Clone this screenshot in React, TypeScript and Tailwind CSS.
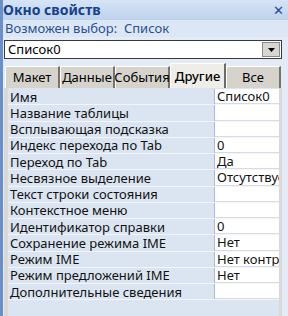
import { useState } from 'react';

const rows: [string, string][] = [
  ['Имя', 'Список0'],
  ['Название таблицы', ''],
  ['Всплывающая подсказка', ''],
  ['Индекс перехода по Tab', '0'],
  ['Переход по Tab', 'Да'],
  ['Несвязное выделение', 'Отсутствует'],
  ['Текст строки состояния', ''],
  ['Контекстное меню', ''],
  ['Идентификатор справки', '0'],
  ['Сохранение режима IME', 'Нет'],
  ['Режим IME', 'Нет контроля'],
  ['Режим предложений IME', 'Нет'],
  ['Дополнительные сведения', ''],
];

const tabs = ['Макет', 'Данные', 'События', 'Другие', 'Все'];

export default function App() {
  const [active, setActive] = useState('Другие');

  return (
    <div
      className="w-[288px] h-[316px] overflow-hidden flex flex-col bg-[#c4d6ee] border-l-[3px] border-[#6a8fc9] text-[13px] leading-none"
      style={{ fontFamily: '"Noto Sans", "DejaVu Sans", sans-serif' }}
    >
      {/* заголовок */}
      <div className="h-[20px] shrink-0 flex items-center justify-between pr-[4px] bg-gradient-to-b from-[#d6e4f5] to-[#bed2ed]">
        <span className="font-bold text-[#15428b] text-[14px]">Окно свойств</span>
        <span className="text-[#1c4aa0] font-bold text-[13px]">✕</span>
      </div>
      <div className="h-[17px] shrink-0 flex items-center bg-[#dce7f5] text-[#2a4f91] text-[13px] pl-[2px]">
        Возможен выбор:&nbsp; Список
      </div>

      <div className="flex-1 flex flex-col bg-[#e3ebf6] pr-[6px] pl-[1px]">
        {/* комбобокс */}
        <div className="mt-[3px] h-[19px] flex border border-[#3a3a3a] bg-white">
          <span className="flex-1 flex items-center pl-[3px] text-black">Список0</span>
          <div className="w-[18px] m-[1px] bg-[#d8d6d0] border border-[#8a8a8a] flex items-center justify-center">
            <svg width="7" height="4" viewBox="0 0 7 4"><path d="M0 0h7L3.5 4z" fill="#000" /></svg>
          </div>
        </div>

        {/* вкладки */}
        <div className="mt-[4px] h-[25px] flex items-end pl-[1px]">
          {tabs.map((t) => {
            const on = t === active;
            return (
              <button
                key={t}
                onClick={() => setActive(t)}
                className={
                  on
                    ? 'h-[25px] w-[56px] flex items-center justify-center bg-[#eeede7] border-t border-l border-white border-r-2 border-r-[#6d6b66] text-black font-medium'
                    : 'h-[22px] w-[55px] flex items-center justify-center bg-[#d6d3cc] border-t border-l border-white border-r-2 border-r-[#77746e] text-black'
                }
              >
                {t}
              </button>
            );
          })}
        </div>

        {/* сетка свойств */}
        <div className="flex-1 flex flex-col bg-[#dbe5f2] border-l-[4px] border-r-[3px] border-[#d9d8d4] pt-[1px] text-[13px]">
          {rows.map(([k, v]) => (
            <div key={k} className="h-[16.25px] flex border-b border-[#f2f5fa] leading-[14px]">
              <div className="flex-1 flex items-center pl-[2px] text-[#111] whitespace-nowrap bg-[#dbe5f2] border-r border-[#a9bbd6]">
                {k}
              </div>
              <div className="w-[64px] flex items-center pl-[2px] bg-white text-[#111] whitespace-nowrap overflow-hidden border-b border-[#d5dce6]">
                {v}
              </div>
            </div>
          ))}
        </div>
      </div>
    </div>
  );
}
